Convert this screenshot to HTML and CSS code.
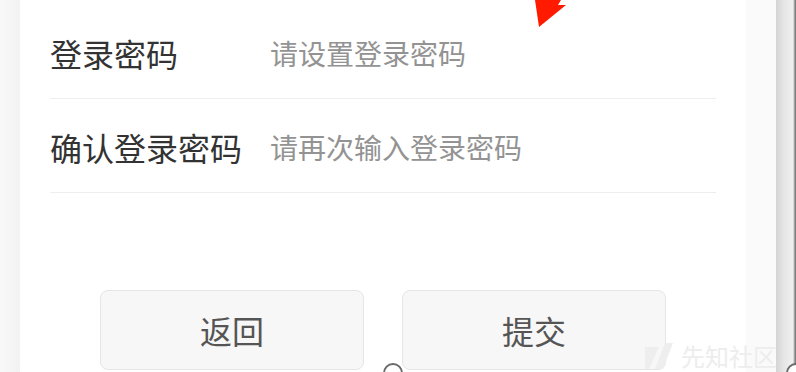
FILE: index.html
```html
<!DOCTYPE html>
<html lang="zh-CN">
<head>
<meta charset="utf-8">
<title>设置登录密码</title>
<link rel="stylesheet" href="styles.css">
</head>
<body>
<div class="page">
  <div class="side-left"></div>
  <main class="content">
    <form class="form">
      <div class="row">
        <label class="label">登录密码</label>
        <input class="field" type="password" placeholder="请设置登录密码">
      </div>
      <div class="row">
        <label class="label">确认登录密码</label>
        <input class="field" type="password" placeholder="请再次输入登录密码">
      </div>
    </form>
    <div class="actions">
      <button class="btn" type="button">返回</button>
      <button class="btn" type="button">提交</button>
    </div>
  </main>
  <div class="gutter"></div>
  <div class="edge"></div>
</div>

<svg class="arrow" width="40" height="32" viewBox="0 0 40 32">
  <polygon points="3,0 7,27 34,5 26,5 29,0" fill="#ff1a00"/>
</svg>

<div class="watermark">
  <svg class="wm-logo" width="28" height="26" viewBox="0 0 28 26">
    <polygon points="0,4 14,4 4,26 0,26" fill="#eeeeee"/>
    <polygon points="20,0 28,0 18,26 10,26" fill="#eeeeee"/>
  </svg>
  <span class="wm-text">先知社区</span>
</div>

<span class="handle handle-mid"></span>
<span class="handle handle-right"></span>
</body>
</html>
```
FILE: styles.css
```css
html, body {
  margin: 0;
  padding: 0;
  height: 372px;
  overflow: hidden;
  background: #fff;
  font-family: "Noto Sans CJK SC", "Noto Sans", sans-serif;
}

.page {
  display: flex;
  height: 372px;
}

.side-left {
  width: 20px;
  flex: none;
  background: linear-gradient(to right, #f9f9f9, #f2f2f3);
}

.content {
  width: 726px;
  flex: none;
  background: #fff;
  padding: 0 30px;
  box-sizing: border-box;
}

.gutter {
  width: 30px;
  flex: none;
  background: #fafafa;
}

.edge {
  flex: 1;
  background: linear-gradient(to right, #d4d4d4, #e6e6e6 40%, #f0f0f0 85%, #8a8a8a 95%, #6f6f6f);
}

.form {
  padding-top: 5px;
}

.row {
  display: flex;
  align-items: center;
  height: 94px;
  padding-top: 3px;
  box-sizing: border-box;
  border-bottom: 1px solid #eeeeee;
}

.label {
  width: 220px;
  flex: none;
  font-size: 32px;
  color: #333;
  white-space: nowrap;
}

.field {
  flex: 1;
  border: none;
  outline: none;
  background: transparent;
  font-family: inherit;
  font-size: 28px;
  color: #333;
  padding: 0;
}

.field::placeholder {
  color: #939393;
}

.actions {
  display: flex;
  justify-content: center;
  gap: 38px;
  margin-top: 97px;
}

.btn {
  width: 264px;
  height: 80px;
  border: 1px solid #e6e6e6;
  border-radius: 8px;
  background: #f7f7f7;
  font-family: inherit;
  font-size: 32px;
  color: #555;
  padding: 0;
}

.arrow {
  position: absolute;
  left: 532px;
  top: 0;
}

.watermark {
  position: absolute;
  left: 645px;
  top: 338px;
  display: flex;
  align-items: center;
  gap: 8px;
}

.wm-text {
  font-size: 24px;
  color: #ededed;
  letter-spacing: 0;
}

.handle {
  position: absolute;
  width: 16px;
  height: 16px;
  border: 2px solid #6a6a6a;
  border-radius: 50%;
  background: #fff;
}

.handle-mid {
  left: 383px;
  top: 363px;
}

.handle-right {
  left: 786px;
  top: 363px;
}
```
